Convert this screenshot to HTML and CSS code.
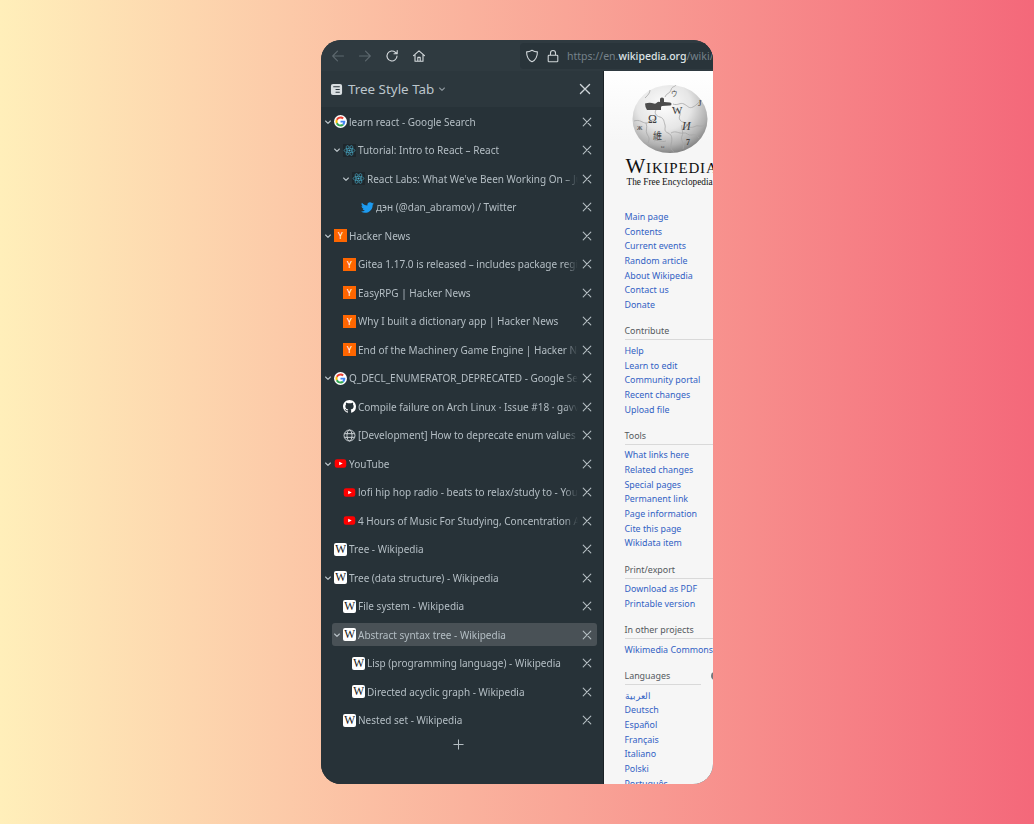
FILE: index.html
```html
<!DOCTYPE html>
<html lang="en">
<head>
<meta charset="utf-8">
<title>Tree Style Tab</title>
<link rel="stylesheet" href="styles.css">
</head>
<body>
<svg class="defs" width="0" height="0" aria-hidden="true">
  <symbol id="i-close" viewBox="0 0 10 10"><path d="M1.2 1.2l7.6 7.6M8.8 1.2L1.2 8.8" fill="none" stroke="currentColor" stroke-width="1.1" stroke-linecap="round"/></symbol>
  <symbol id="i-chev" viewBox="0 0 8 8"><path d="M1.6 3L4 5.4 6.4 3" fill="none" stroke="currentColor" stroke-width="1.1" stroke-linecap="round" stroke-linejoin="round"/></symbol>
  <symbol id="i-google" viewBox="-7 -7 62 62">
    <circle cx="24" cy="24" r="31" fill="#fff"/>
    <path fill="#EA4335" d="M24 9.5c3.54 0 6.71 1.22 9.21 3.6l6.85-6.85C35.9 2.38 30.47 0 24 0 14.62 0 6.51 5.38 2.56 13.22l7.98 6.19C12.43 13.72 17.74 9.5 24 9.5z"/>
    <path fill="#4285F4" d="M46.98 24.55c0-1.57-.15-3.09-.38-4.55H24v9.02h12.94c-.58 2.96-2.26 5.48-4.78 7.18l7.73 6c4.51-4.18 7.09-10.36 7.09-17.65z"/>
    <path fill="#FBBC05" d="M10.53 28.59c-.48-1.45-.76-2.99-.76-4.59s.27-3.14.76-4.59l-7.98-6.19C.92 16.46 0 20.12 0 24c0 3.88.92 7.54 2.56 10.78l7.97-6.19z"/>
    <path fill="#34A853" d="M24 48c6.48 0 11.93-2.13 15.89-5.81l-7.73-6c-2.15 1.45-4.92 2.3-8.16 2.3-6.26 0-11.57-4.22-13.47-9.91l-7.98 6.19C6.51 42.62 14.62 48 24 48z"/>
  </symbol>
  <symbol id="i-react" viewBox="0 0 24 24">
    <rect width="24" height="24" fill="#1f272c"/>
    <circle cx="12" cy="12" r="2" fill="#4fb8d6"/>
    <g fill="none" stroke="#4fb8d6" stroke-width="1">
      <ellipse cx="12" cy="12" rx="10" ry="4"/>
      <ellipse cx="12" cy="12" rx="10" ry="4" transform="rotate(60 12 12)"/>
      <ellipse cx="12" cy="12" rx="10" ry="4" transform="rotate(120 12 12)"/>
    </g>
  </symbol>
  <symbol id="i-twitter" viewBox="0 0 24 24"><path fill="#1d9bf0" d="M23.953 4.57a10 10 0 01-2.825.775 4.958 4.958 0 002.163-2.723c-.951.555-2.005.959-3.127 1.184a4.92 4.92 0 00-8.384 4.482C7.69 8.095 4.067 6.13 1.64 3.162a4.822 4.822 0 00-.666 2.475c0 1.71.87 3.213 2.188 4.096a4.904 4.904 0 01-2.228-.616v.06a4.923 4.923 0 003.946 4.827 4.996 4.996 0 01-2.212.085 4.936 4.936 0 004.604 3.417 9.867 9.867 0 01-6.102 2.105c-.39 0-.779-.023-1.17-.067a13.995 13.995 0 007.557 2.209c9.053 0 13.998-7.496 13.998-13.985 0-.21 0-.42-.015-.63A9.935 9.935 0 0024 4.59z"/></symbol>
  <symbol id="i-github" viewBox="0 0 16 16"><path fill="#fff" d="M8 0C3.58 0 0 3.58 0 8c0 3.54 2.29 6.53 5.47 7.59.4.07.55-.17.55-.38 0-.19-.01-.82-.01-1.49-2.01.37-2.53-.49-2.69-.94-.09-.23-.48-.94-.82-1.13-.28-.15-.68-.52-.01-.53.63-.01 1.08.58 1.23.82.72 1.21 1.87.87 2.33.66.07-.52.28-.87.51-1.07-1.78-.2-3.64-.89-3.64-3.95 0-.87.31-1.59.82-2.15-.08-.2-.36-1.02.08-2.12 0 0 .67-.21 2.2.82.64-.18 1.32-.27 2-.27.68 0 1.36.09 2 .27 1.53-1.04 2.2-.82 2.2-.82.44 1.1.16 1.92.08 2.12.51.56.82 1.27.82 2.15 0 3.07-1.87 3.75-3.65 3.95.29.25.54.73.54 1.48 0 1.07-.01 1.93-.01 2.2 0 .21.15.46.55.38A8.013 8.013 0 0016 8c0-4.42-3.58-8-8-8z"/></symbol>
  <symbol id="i-globe" viewBox="0 0 14 14"><g fill="none" stroke="#d5dadd" stroke-width="1"><circle cx="7" cy="7" r="5.9"/><ellipse cx="7" cy="7" rx="2.7" ry="5.9"/><path d="M1.6 5h10.8M1.6 9h10.8"/></g></symbol>
  <symbol id="i-yt" viewBox="0 0 14 14"><rect x=".8" y="2.4" width="12.4" height="9.2" rx="2.4" fill="#f00"/><path d="M5.6 5l3.8 2-3.800 2z" fill="#fff"/></symbol>
</svg>

<div class="window">
  <header class="toolbar">
    <div class="nav-buttons">
      <svg class="tb-icon dim" viewBox="0 0 14 14"><path d="M12.5 7H1.8M6.5 2.2L1.7 7l4.8 4.8"/></svg>
      <svg class="tb-icon dim" viewBox="0 0 14 14"><path d="M1.5 7h10.7M7.5 2.2L12.3 7l-4.8 4.8"/></svg>
      <svg class="tb-icon" viewBox="0 0 14 14"><path d="M12 7a5 5 0 1 1-1.6-3.7L12 4.6M12.2 1.6v3.2H9"/></svg>
      <svg class="tb-icon" viewBox="0 0 14 14"><path d="M1.5 6.6L7 1.800l5.500 4.800M3 5.400v6.800h8V5.400M5.800 12.200V8.400h2.400v3.800"/></svg>
    </div>
    <div class="urlbar">
      <svg class="url-icon" viewBox="0 0 14 14"><path d="M7 1.200c1.600 1 3.400 1.600 5.400 1.700 0 4.600-1.600 8-5.400 9.900C3.200 10.900 1.600 7.500 1.600 2.900 3.600 2.800 5.400 2.200 7 1.200z"/></svg>
      <svg class="url-icon" viewBox="0 0 14 14"><path d="M3 6.200h8a.8.8 0 0 1 .8.8v5a.8.8 0 0 1-.8.8H3a.8.8 0 0 1-.8-.8V7a.8.8 0 0 1 .8-.8zM4.500 6.200V4a2.500 2.500 0 0 1 5 0v2.200"/></svg>
      <span class="url">https://en.<b>wikipedia.org</b>/wiki/Abstract_syntax_tree</span>
    </div>
  </header>

  <div class="content">
    <aside class="sidebar">
      <div class="side-head">
        <svg class="side-icon" viewBox="0 0 14 14"><rect x="1" y="1" width="12" height="12" rx="2.200" fill="#d9dee1"/><path d="M3.500 4h7M6 7h4.500M6 10h4.500" stroke="#2b363d" stroke-width="1.200"/></svg>
        <span class="side-title">Tree Style Tab</span>
        <svg class="side-chev"><use href="#i-chev"/></svg>
        <svg class="side-close"><use href="#i-close"/></svg>
      </div>

      <ul class="tabs">
        <li class="tab l0"><svg class="twisty"><use href="#i-chev"/></svg><svg class="fav"><use href="#i-google"/></svg><span class="label">learn react - Google Search</span><svg class="x"><use href="#i-close"/></svg></li>
        <li class="tab l1"><svg class="twisty"><use href="#i-chev"/></svg><svg class="fav"><use href="#i-react"/></svg><span class="label">Tutorial: Intro to React – React</span><svg class="x"><use href="#i-close"/></svg></li>
        <li class="tab l2"><svg class="twisty"><use href="#i-chev"/></svg><svg class="fav"><use href="#i-react"/></svg><span class="label">React Labs: What We've Been Working On – June 2022</span><svg class="x"><use href="#i-close"/></svg></li>
        <li class="tab l3"><span class="twisty"></span><svg class="fav"><use href="#i-twitter"/></svg><span class="label">дэн (@dan_abramov) / Twitter</span><svg class="x"><use href="#i-close"/></svg></li>
        <li class="tab l0"><svg class="twisty"><use href="#i-chev"/></svg><span class="fav hn">Y</span><span class="label">Hacker News</span><svg class="x"><use href="#i-close"/></svg></li>
        <li class="tab l1"><span class="twisty"></span><span class="fav hn">Y</span><span class="label">Gitea 1.17.0 is released – includes package registry</span><svg class="x"><use href="#i-close"/></svg></li>
        <li class="tab l1"><span class="twisty"></span><span class="fav hn">Y</span><span class="label">EasyRPG | Hacker News</span><svg class="x"><use href="#i-close"/></svg></li>
        <li class="tab l1"><span class="twisty"></span><span class="fav hn">Y</span><span class="label">Why I built a dictionary app | Hacker News</span><svg class="x"><use href="#i-close"/></svg></li>
        <li class="tab l1"><span class="twisty"></span><span class="fav hn">Y</span><span class="label">End of the Machinery Game Engine | Hacker News</span><svg class="x"><use href="#i-close"/></svg></li>
        <li class="tab l0"><svg class="twisty"><use href="#i-chev"/></svg><svg class="fav"><use href="#i-google"/></svg><span class="label">Q_DECL_ENUMERATOR_DEPRECATED - Google Search</span><svg class="x"><use href="#i-close"/></svg></li>
        <li class="tab l1"><span class="twisty"></span><svg class="fav"><use href="#i-github"/></svg><span class="label">Compile failure on Arch Linux · Issue #18 · gavv/signal</span><svg class="x"><use href="#i-close"/></svg></li>
        <li class="tab l1"><span class="twisty"></span><svg class="fav"><use href="#i-globe"/></svg><span class="label">[Development] How to deprecate enum values in Qt</span><svg class="x"><use href="#i-close"/></svg></li>
        <li class="tab l0"><svg class="twisty"><use href="#i-chev"/></svg><svg class="fav"><use href="#i-yt"/></svg><span class="label">YouTube</span><svg class="x"><use href="#i-close"/></svg></li>
        <li class="tab l1"><span class="twisty"></span><svg class="fav"><use href="#i-yt"/></svg><span class="label">lofi hip hop radio - beats to relax/study to - YouTube</span><svg class="x"><use href="#i-close"/></svg></li>
        <li class="tab l1"><span class="twisty"></span><svg class="fav"><use href="#i-yt"/></svg><span class="label">4 Hours of Music For Studying, Concentration And Focus</span><svg class="x"><use href="#i-close"/></svg></li>
        <li class="tab l0"><span class="twisty"></span><span class="fav wp">W</span><span class="label">Tree - Wikipedia</span><svg class="x"><use href="#i-close"/></svg></li>
        <li class="tab l0"><svg class="twisty"><use href="#i-chev"/></svg><span class="fav wp">W</span><span class="label">Tree (data structure) - Wikipedia</span><svg class="x"><use href="#i-close"/></svg></li>
        <li class="tab l1"><span class="twisty"></span><span class="fav wp">W</span><span class="label">File system - Wikipedia</span><svg class="x"><use href="#i-close"/></svg></li>
        <li class="tab l1 active"><svg class="twisty"><use href="#i-chev"/></svg><span class="fav wp">W</span><span class="label">Abstract syntax tree - Wikipedia</span><svg class="x"><use href="#i-close"/></svg></li>
        <li class="tab l2"><span class="twisty"></span><span class="fav wp">W</span><span class="label">Lisp (programming language) - Wikipedia</span><svg class="x"><use href="#i-close"/></svg></li>
        <li class="tab l2"><span class="twisty"></span><span class="fav wp">W</span><span class="label">Directed acyclic graph - Wikipedia</span><svg class="x"><use href="#i-close"/></svg></li>
        <li class="tab l1"><span class="twisty"></span><span class="fav wp">W</span><span class="label">Nested set - Wikipedia</span><svg class="x"><use href="#i-close"/></svg></li>
      </ul>
      <div class="new-tab"><svg viewBox="0 0 12 12"><path d="M6 .5v11M.5 6h11"/></svg></div>
    </aside>

    <main class="page">
      <div class="logo">
        <svg class="globe" viewBox="0 0 76 68">
          <defs>
            <radialGradient id="gl" cx="42%" cy="30%" r="72%">
              <stop offset="0" stop-color="#fdfdfd"/><stop offset=".5" stop-color="#e6e6e6"/><stop offset=".82" stop-color="#b0b0b0"/><stop offset="1" stop-color="#808080"/>
            </radialGradient>
          </defs>
          <ellipse cx="38" cy="34" rx="37.500" ry="34" fill="url(#gl)"/>
          <path d="M13 18.500q5-1.500 9 0 2 .5 3-1 1-1 3-.5V14q0-1.500 2-1.500t2 1.500v3l6 .5q1.500 0 1.500 1.500t-1.500 1.500l-8 .5q-1 0-1 1.500V25H15q-2-3-2-6.500z" fill="#4d4d4d"/>
          <g fill="none" stroke="#a6a6a6" stroke-width=".8">
            <path d="M33 12c1-4 5-3 6-7s4-3 5-5"/>
            <path d="M41 19c5 2 7-2 11 0s5 5 9 3 6-6 9-6"/>
            <path d="M40 22c3 3 7 2 8 5s-2 5 0 8 5 1 7 5 7 2 9 1 6 2 10-2"/>
            <path d="M24 25c-2 3 0 6 4 7s4 5 5 8-2 6 3 8 4 7 3 12 3 6 3 8"/>
            <path d="M2 36c6-2 8 2 12 2s4-3 9-4"/>
            <path d="M14 38c2 5-1 7 1 11s3 4 1 9"/>
            <path d="M39 48c5-3 8 1 12 0s5 3 9 2 5 1 7 3"/>
            <path d="M22 56c5-2 7 2 12 0"/>
            <path d="M13 13c3-3 5-5 5-8"/>
            <path d="M50 40c-1 4 2 7 0 11s3 8 1 13"/>
          </g>
          <g class="globe-glyphs">
            <text x="16" y="38" font-size="12">Ω</text>
            <text x="40" y="29" font-size="11">W</text>
            <text x="50" y="45" font-size="12" font-style="italic">И</text>
            <text x="21" y="54" font-size="9" class="cjk">維</text>
            <text x="66" y="21" font-size="9">J</text>
            <text x="39" y="11" font-size="6.500" class="cjk">ウ</text>
            <text x="54" y="60" font-size="8" font-weight="700">7</text>
            <text x="5" y="45" font-size="6">Ж</text>
            <text x="29" y="63" font-size="5">ω</text>
          </g>
        </svg>
        <div class="wordmark">Wikipedia</div>
        <div class="tagline">The Free Encyclopedia</div>
      </div>

      <ul class="links first">
        <li>Main page</li><li>Contents</li><li>Current events</li><li>Random article</li><li>About Wikipedia</li><li>Contact us</li><li>Donate</li>
      </ul>
      <h3 class="sec">Contribute</h3>
      <ul class="links">
        <li>Help</li><li>Learn to edit</li><li>Community portal</li><li>Recent changes</li><li>Upload file</li>
      </ul>
      <h3 class="sec">Tools</h3>
      <ul class="links">
        <li>What links here</li><li>Related changes</li><li>Special pages</li><li>Permanent link</li><li>Page information</li><li>Cite this page</li><li>Wikidata item</li>
      </ul>
      <h3 class="sec">Print/export</h3>
      <ul class="links">
        <li>Download as PDF</li><li>Printable version</li>
      </ul>
      <h3 class="sec">In other projects</h3>
      <ul class="links">
        <li>Wikimedia Commons</li>
      </ul>
      <h3 class="sec short">Languages<span class="gear"></span></h3>
      <ul class="links">
        <li>العربية</li><li>Deutsch</li><li>Español</li><li>Français</li><li>Italiano</li><li>Polski</li><li>Português</li>
      </ul>
    </main>
  </div>
</div>
</body>
</html>
```

FILE: styles.css
```css
* { box-sizing: border-box; }
html, body { height: 100%; }
body {
  margin: 0;
  display: flex;
  align-items: center;
  justify-content: center;
  background: linear-gradient(90deg, #ffefba 0%, #f4687a 100%);
  font-family: "Noto Sans", sans-serif;
}
.defs { position: absolute; }
ul { list-style: none; margin: 0; padding: 0; }

.window {
  width: 392px;
  height: 744px;
  border-radius: 20px;
  overflow: hidden;
  display: flex;
  flex-direction: column;
  background: #273238;
}

.toolbar {
  height: 31px;
  flex: none;
  display: flex;
  align-items: center;
  background: #2f3a40;
}
.nav-buttons {
  width: 199px;
  flex: none;
  display: flex;
  gap: 13px;
  padding-left: 10px;
}
.tb-icon { width: 14px; height: 14px; fill: none; stroke: #d5dadd; stroke-width: 1.1; stroke-linecap: round; stroke-linejoin: round; }
.tb-icon.dim { stroke: #5d686e; }
.urlbar {
  flex: 1;
  min-width: 0;
  height: 26px;
  margin-top: 1px;
  display: flex;
  align-items: center;
  gap: 7px;
  padding-left: 5px;
  background: #29343a;
  border-radius: 4px 0 0 4px;
  overflow: hidden;
  white-space: nowrap;
}
.url-icon { width: 14px; height: 14px; flex: none; fill: none; stroke: #cfd5d8; stroke-width: 1.1; stroke-linejoin: round; }
.url { font-size: 10.5px; color: #76828a; line-height: 24px; }
.url b { font-weight: 500; color: #dfe4e6; }

.content { flex: 1; min-height: 0; display: flex; }

.sidebar {
  width: 283px;
  flex: none;
  background: #273238;
  border-right: 1px solid #1b2226;
  display: flex;
  flex-direction: column;
}
.side-head {
  height: 36px;
  flex: none;
  display: flex;
  align-items: center;
  padding-left: 9px;
  background: #2c373d;
  color: #c6ced3;
}
.side-icon { width: 13px; height: 13px; flex: none; }
.side-title { font-size: 13.4px; line-height: 18px; padding-bottom: 1px; margin-left: 5px; color: #bcc6cc; }
.side-chev { width: 8px; height: 8px; margin-left: 4px; color: #8d979d; }
.side-close { width: 12px; height: 12px; margin-left: auto; margin-right: 12px; color: #ced4d8; }

.tabs { padding-top: 3px; display: flex; flex-direction: column; gap: 5.5px; }
.tab {
  height: 23px;
  margin: 0 6px 0 2px;
  padding-right: 4px;
  display: flex;
  align-items: center;
  border-radius: 3px;
  white-space: nowrap;
}
.tab.l1 { margin-left: 11px; }
.tab.l2 { margin-left: 20px; }
.tab.l3 { margin-left: 29px; }
.tab.active { background: #495156; }
.twisty { width: 8px; height: 8px; margin-left: 1px; flex: none; color: #bcc5ca; }
.fav { width: 13px; height: 13px; margin-left: 2px; flex: none; display: block; }
.hn {
  background: #ff6600;
  color: #fff;
  font-size: 8.5px;
  line-height: 13px;
  text-align: center;
}
.wp {
  background: #fff;
  color: #111;
  border-radius: 2px;
  font-family: "Liberation Serif", serif;
  font-size: 11.5px;
  line-height: 13px;
  text-align: center;
  letter-spacing: -.5px;
}
.label {
  flex: 1;
  min-width: 0;
  margin-left: 2px;
  font-size: 10px;
  line-height: 14px;
  color: #b4bec4;
  overflow: hidden;
  -webkit-mask-image: linear-gradient(90deg, #000 calc(100% - 14px), transparent 100%);
  mask-image: linear-gradient(90deg, #000 calc(100% - 14px), transparent 100%);
}
.x { width: 10px; height: 10px; flex: none; margin-left: 4px; margin-right: 1px; color: #b4bdc2; }

.new-tab { height: 20px; margin-top: 3px; display: flex; justify-content: center; align-items: center; padding-right: 8px; }
.new-tab svg { width: 11px; height: 11px; fill: none; stroke: #b4bdc2; stroke-width: 1.1; }

.page {
  flex: 1;
  min-width: 0;
  overflow: hidden;
  background: linear-gradient(180deg, #fff 0, #f6f6f6 70px);
  padding-left: 20.5px;
  font-size: 8.9px;
  line-height: 14.67px;
  white-space: nowrap;
}
.logo { height: 139px; padding-top: 14px; }
.globe { display: block; width: 76px; height: 68px; margin-left: 7px; }
.globe-glyphs { font-family: "Liberation Serif", serif; fill: #3c3c3c; }
.globe-glyphs .cjk { font-family: "Noto Sans CJK SC", sans-serif; }
.wordmark {
  font-family: "Liberation Serif", serif;
  font-variant: small-caps;
  font-size: 21px;
  line-height: 20px;
  margin-top: 3px;
  margin-left: 1px;
  letter-spacing: .8px;
  color: #111;
}
.tagline {
  font-family: "Liberation Serif", serif;
  font-size: 9.3px;
  line-height: 12px;
  margin-left: 2px;
  color: #111;
}
.links { color: #3262c4; padding-top: 3.5px; }
.links.first { padding-top: 0; }
.sec {
  margin: 11.7px 0 0;
  padding-bottom: 1px;
  font-size: 8.9px;
  line-height: 14px;
  font-weight: 400;
  color: #54595d;
  border-bottom: 1px solid #d9d9d9;
  position: relative;
}
.sec.short { width: 76px; }
.gear {
  position: absolute;
  left: 86px;
  top: 3px;
  width: 8px;
  height: 8px;
  border-radius: 50%;
  background: #72777d;
}
```
